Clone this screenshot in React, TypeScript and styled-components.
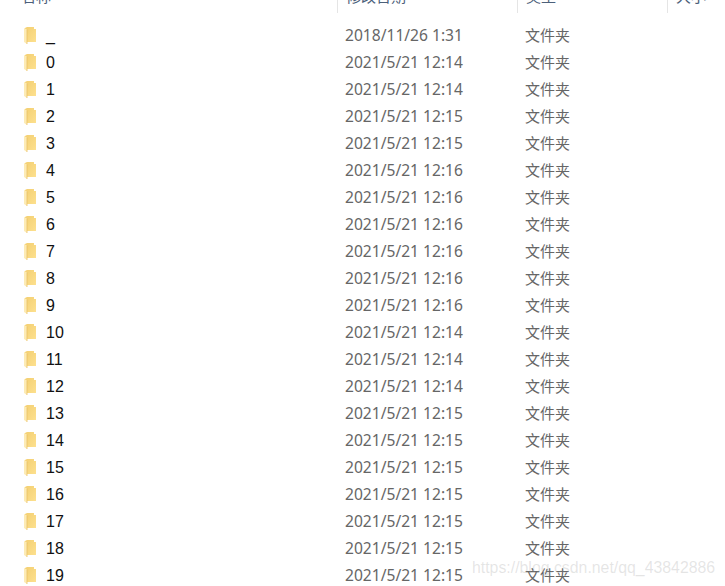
import styled, { createGlobalStyle } from "styled-components";

const GlobalStyle = createGlobalStyle`
  html, body {
    margin: 0;
    padding: 0;
    background: #fff;
  }
`;

const Page = styled.div`
  position: relative;
  width: 725px;
  height: 586px;
  overflow: hidden;
  background: #fff;
  font-family: "Noto Sans", "Noto Sans CJK SC", sans-serif;
`;

const columns = "337px 180px 150px 1fr";

const Header = styled.div`
  display: grid;
  grid-template-columns: ${columns};
  height: 13px;
  overflow: hidden;
`;

const HeaderCell = styled.div<{ $first?: boolean }>`
  display: flex;
  align-items: flex-end;
  height: 13px;
  box-sizing: border-box;
  padding-left: ${({ $first }) => ($first ? "21px" : "8px")};
  padding-bottom: 6px;
  border-left: ${({ $first }) => ($first ? "none" : "1px solid #e5e5e5")};
  font-size: 15px;
  line-height: 22px;
  color: #4c607a;
  white-space: nowrap;
`;

const List = styled.div`
  padding-top: 9px;
`;

const Row = styled.div`
  display: grid;
  grid-template-columns: ${columns};
  height: 27px;
  align-items: center;
`;

const NameCell = styled.div`
  display: flex;
  align-items: center;
  gap: 10px;
  padding-left: 24px;
  font-family: "Liberation Sans", "Noto Sans CJK SC", sans-serif;
  font-size: 16px;
  color: #111;
`;

const FolderGlyph = styled.svg`
  flex: none;
  width: 12px;
  height: 17px;
  margin-bottom: 1px;
`;

const DateCell = styled.div`
  padding-left: 8px;
  padding-bottom: 2px;
  font-size: 15.6px;
  color: #666;
  white-space: nowrap;
`;

const TypeCell = styled.div`
  padding-left: 8px;
  padding-bottom: 2px;
  font-size: 15px;
  color: #666;
  white-space: nowrap;
`;

const Watermark = styled.div`
  position: absolute;
  left: 472px;
  top: 558px;
  font-family: "Liberation Sans", sans-serif;
  font-size: 15.85px;
  line-height: 20px;
  color: rgba(150, 150, 150, 0.25);
  white-space: nowrap;
`;

type Folder = { name: string; modified: string };

const folders: Folder[] = [
  { name: "_", modified: "2018/11/26 1:31" },
  { name: "0", modified: "2021/5/21 12:14" },
  { name: "1", modified: "2021/5/21 12:14" },
  { name: "2", modified: "2021/5/21 12:15" },
  { name: "3", modified: "2021/5/21 12:15" },
  { name: "4", modified: "2021/5/21 12:16" },
  { name: "5", modified: "2021/5/21 12:16" },
  { name: "6", modified: "2021/5/21 12:16" },
  { name: "7", modified: "2021/5/21 12:16" },
  { name: "8", modified: "2021/5/21 12:16" },
  { name: "9", modified: "2021/5/21 12:16" },
  { name: "10", modified: "2021/5/21 12:14" },
  { name: "11", modified: "2021/5/21 12:14" },
  { name: "12", modified: "2021/5/21 12:14" },
  { name: "13", modified: "2021/5/21 12:15" },
  { name: "14", modified: "2021/5/21 12:15" },
  { name: "15", modified: "2021/5/21 12:15" },
  { name: "16", modified: "2021/5/21 12:15" },
  { name: "17", modified: "2021/5/21 12:15" },
  { name: "18", modified: "2021/5/21 12:15" },
  { name: "19", modified: "2021/5/21 12:15" },
];

function FolderIcon() {
  return (
    <FolderGlyph viewBox="0 0 12 17">
      <defs>
        <linearGradient id="folderBack" x1="0" y1="0" x2="1" y2="1">
          <stop offset="0" stopColor="#f3cf72" />
          <stop offset="1" stopColor="#fde08e" />
        </linearGradient>
      </defs>
      <path d="M1 1L3 0H10V2H12V15H3V14H1Z" fill="url(#folderBack)" />
      <path d="M0 1L3 2.5V17L0 15Z" fill="#fdebb5" />
      <path d="M3 2.5V17" stroke="#e8c064" strokeWidth="0.8" fill="none" />
    </FolderGlyph>
  );
}

export default function App() {
  return (
    <Page>
      <GlobalStyle />
      <Header>
        <HeaderCell $first>名称</HeaderCell>
        <HeaderCell>修改日期</HeaderCell>
        <HeaderCell>类型</HeaderCell>
        <HeaderCell>大小</HeaderCell>
      </Header>
      <List>
        {folders.map((folder) => (
          <Row key={folder.name}>
            <NameCell>
              <FolderIcon />
              {folder.name}
            </NameCell>
            <DateCell>{folder.modified}</DateCell>
            <TypeCell>文件夹</TypeCell>
          </Row>
        ))}
      </List>
      <Watermark>https://blog.csdn.net/qq_43842886</Watermark>
    </Page>
  );
}
